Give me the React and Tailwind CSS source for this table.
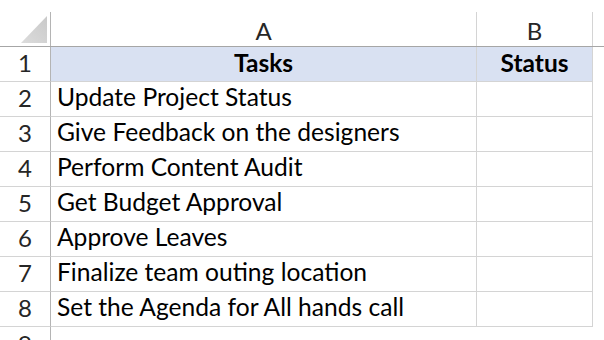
export default function App() {
  const rows = [
    "Update Project Status",
    "Give Feedback on the designers",
    "Perform Content Audit",
    "Get Budget Approval",
    "Approve Leaves",
    "Finalize team outing location",
    "Set the Agenda for All hands call",
  ];
  const font = { fontFamily: "Lato, 'Open Sans', sans-serif" };
  return (
    <div className="w-[604px] h-[340px] overflow-hidden bg-white text-[#1a1a1a]" style={font}>
      {/* column header */}
      <div className="flex h-[47px] border-b border-[#a6a6a6]">
        <div className="w-[51px] shrink-0 flex flex-col">
          <svg width="51" height="46" viewBox="0 0 51 46">
            <defs>
              <linearGradient id="tri" x1="0" y1="1" x2="1" y2="0">
                <stop offset="0" stopColor="#dcdcdc" />
                <stop offset="1" stopColor="#c9c9c9" />
              </linearGradient>
            </defs>
            <polygon points="21,43 47,43 47,16" fill="url(#tri)" />
            <rect x="50" y="12" width="1" height="34" fill="#b4b4b4" />
          </svg>
        </div>
        <div className="w-[426px] shrink-0 mt-[12px] h-[34px] border-r border-[#d4d4d4] flex items-end justify-center pb-[3px] text-[24px] leading-none text-[#262626]">
          A
        </div>
        <div className="w-[116px] shrink-0 mt-[12px] h-[34px] border-r border-[#d4d4d4] flex items-end justify-center pb-[3px] text-[24px] leading-none text-[#262626]">
          B
        </div>
      </div>
      {/* row 1 header */}
      <div className="flex h-[35px]">
        <div className="w-[51px] shrink-0 border-r border-b border-[#b4b4b4] border-b-[#d4d4d4] flex items-end justify-center pb-[6px] text-[24px] leading-none text-[#262626]">
          1
        </div>
        <div className="w-[426px] shrink-0 bg-[#d9e1f2] border-r border-b border-[#d4d4d4] flex items-end justify-center pb-[6px] text-[24.5px] leading-none font-bold text-black">
          Tasks
        </div>
        <div className="w-[116px] shrink-0 bg-[#d9e1f2] border-r border-b border-[#d4d4d4] flex items-end justify-center pb-[6px] text-[24.5px] leading-none font-bold text-black">
          Status
        </div>
      </div>
      {rows.map((t, i) => (
        <div key={i} className="flex h-[35px]">
          <div className="w-[51px] shrink-0 border-r border-b border-[#b4b4b4] border-b-[#d4d4d4] flex items-end justify-center pb-[6px] text-[24px] leading-none text-[#262626]">
            {i + 2}
          </div>
          <div className="w-[426px] shrink-0 border-r border-b border-[#d4d4d4] flex items-end pl-[6px] pb-[6px] text-[24.6px] leading-none text-black whitespace-nowrap">
            {t}
          </div>
          <div className="w-[116px] shrink-0 border-r border-b border-[#d4d4d4]" />
        </div>
      ))}
      <div className="flex h-[35px]">
        <div className="w-[51px] shrink-0 border-r border-[#b4b4b4] flex items-end justify-center pb-[6px] text-[24px] leading-none text-[#262626]">
          9
        </div>
      </div>
    </div>
  );
}
